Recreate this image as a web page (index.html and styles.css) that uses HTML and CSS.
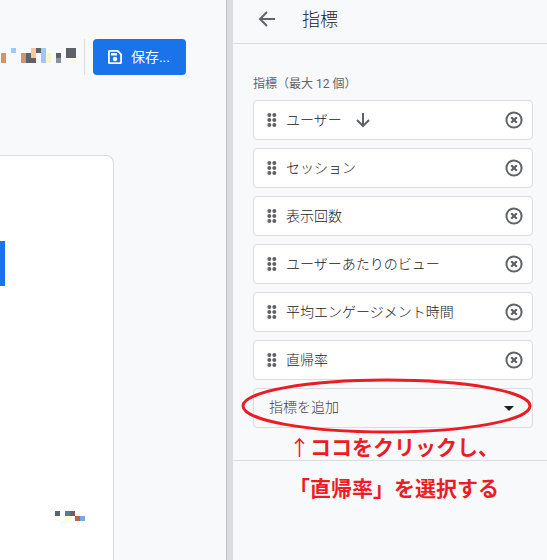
FILE: index.html
```html
<!DOCTYPE html>
<html lang="ja">
<head>
<meta charset="utf-8">
<title>指標</title>
<link rel="stylesheet" href="styles.css">
</head>
<body>
<svg class="sprite" aria-hidden="true">
  <symbol id="grip" viewBox="0 0 10 14"><g fill="#5f6368"><circle cx="2.3" cy="2" r="2"/><circle cx="7.3" cy="2" r="2"/><circle cx="2.3" cy="7" r="2"/><circle cx="7.3" cy="7" r="2"/><circle cx="2.3" cy="12" r="2"/><circle cx="7.3" cy="12" r="2"/></g></symbol>
  <symbol id="remove" viewBox="0 0 18 18"><circle cx="9" cy="9" r="7.6" fill="none" stroke="#5f6368" stroke-width="2"/><path d="M6.200 6.200l5.600 5.600M11.800 6.200l-5.600 5.600" stroke="#5f6368" stroke-width="2.300"/></symbol>
</svg>
<div class="app">
  <main class="report">
    <div class="toolbar">
      <svg class="mosaic" width="75" height="15" shape-rendering="crispEdges" aria-hidden="true">
        <path fill="#5f6169" d="M25 5h5v10h-5zM30 10h5v5h-5zM35 0h5v5h-5zM55 5h5v5h-5zM65 0h10v10h-10z"/>
        <path fill="#d39469" d="M0 5h5v10h-5zM20 5h5v10h-5z"/>
        <path fill="#9dc8fa" d="M10 0h5v5h-5zM40 0h5v15h-5z"/>
        <path fill="#fac898" d="M30 0h5v10h-5z"/>
        <path fill="#f6f8cc" d="M45 5h5v10h-5z"/>
        <path fill="#8b949b" d="M55 10h5v5h-5z"/>
        <path fill="#f6f8e0" d="M70 10h5v5h-5z"/>
      </svg>
      <button class="save" type="button">
        <svg width="16" height="16" viewBox="0 0 16 16" aria-hidden="true"><path fill="#fff" fill-rule="evenodd" d="M2.500 1H11l4 4v8.500a1.500 1.500 0 0 1-1.500 1.500h-11A1.500 1.500 0 0 1 1 13.500v-11A1.500 1.500 0 0 1 2.500 1zM2.800 2.800v10.400h10.400V5.800l-3-3z"/><path fill="#fff" d="M4 4h6v2.500H4z"/><circle cx="8" cy="10" r="2.200" fill="#fff"/></svg>
        <span>保存...</span>
      </button>
    </div>
    <section class="card">
      <div class="bar"></div>
      <svg class="values" width="30" height="15" shape-rendering="crispEdges" aria-hidden="true">
        <path fill="#5c6070" d="M0 0h5v5h-5z"/><path fill="#5b78ad" d="M10 0h5v5h-5z"/>
        <path fill="#715f62" d="M15 0h5v5h-5z"/><path fill="#fff9ec" d="M20 0h5v5h-5zM0 5h5v5h-5z"/>
        <path fill="#ffffc8" d="M10 5h5v5h-5z"/><path fill="#b8624f" d="M20 5h5v5h-5z"/>
        <path fill="#74a9e8" d="M25 5h5v5h-5z"/><path fill="#f0fdff" d="M5 10h5v5h-5z"/>
      </svg>
    </section>
  </main>
  <aside class="panel">
    <header class="panel-head">
      <button class="icon-button" type="button" aria-label="戻る"><svg width="18" height="18" viewBox="0 0 18 18"><path d="M17 9H2.500M9 2L2 9l7 7" fill="none" stroke="#5f6368" stroke-width="2"/></svg></button>
      <h1>指標</h1>
    </header>
    <section class="metrics">
      <h2>指標（最大 12 個）</h2>
      <ul>
        <li><svg class="grip"><use href="#grip"/></svg><span>ユーザー</span><svg class="sort" width="16" height="16" viewBox="0 0 16 16"><path d="M8 1v13M2 8l6 6 6-6" fill="none" stroke="#5f6368" stroke-width="2"/></svg><button class="icon-button remove" type="button" aria-label="削除"><svg><use href="#remove"/></svg></button></li>
        <li><svg class="grip"><use href="#grip"/></svg><span>セッション</span><button class="icon-button remove" type="button" aria-label="削除"><svg><use href="#remove"/></svg></button></li>
        <li><svg class="grip"><use href="#grip"/></svg><span>表示回数</span><button class="icon-button remove" type="button" aria-label="削除"><svg><use href="#remove"/></svg></button></li>
        <li><svg class="grip"><use href="#grip"/></svg><span>ユーザーあたりのビュー</span><button class="icon-button remove" type="button" aria-label="削除"><svg><use href="#remove"/></svg></button></li>
        <li><svg class="grip"><use href="#grip"/></svg><span>平均エンゲージメント時間</span><button class="icon-button remove" type="button" aria-label="削除"><svg><use href="#remove"/></svg></button></li>
        <li><svg class="grip"><use href="#grip"/></svg><span>直帰率</span><button class="icon-button remove" type="button" aria-label="削除"><svg><use href="#remove"/></svg></button></li>
      </ul>
      <div class="add">
        <select aria-label="指標を追加"><option>指標を追加</option></select>
        <svg class="caret" width="10" height="5" viewBox="0 0 10 5"><path d="M0 0h10L5 5z" fill="#202124"/></svg>
        <svg class="ring" viewBox="0 0 290 56" preserveAspectRatio="none"><ellipse cx="145" cy="28" rx="143" ry="26" fill="none" stroke="#ed1c24" stroke-width="3"/></svg>
        <p class="note"><span class="arrow">↑</span>ココをクリックし、<br>「直帰率」を選択する</p>
      </div>
    </section>
  </aside>
</div>
</body>
</html>
```
FILE: styles.css
```css
* { box-sizing: border-box; }
body {
  margin: 0;
  background: #f8f9fb;
  color: #202124;
  font-family: Roboto, "Noto Sans CJK JP", sans-serif;
  font-size: 14px;
  font-weight: 300;
}
.sprite { position: absolute; width: 0; height: 0; }
.app {
  display: grid;
  grid-template-columns: minmax(0, 233fr) minmax(0, 314fr);
  min-height: 100vh;
}
.report {
  display: flex;
  flex-direction: column;
  border-right: 6px solid #dadce0;
  box-shadow: inset -1px 0 #bdc1c6;
}
.toolbar {
  display: flex;
  justify-content: flex-end;
  margin: 39px 41px 80px 0;
}
.mosaic { flex: none; margin: 9px 8px 0 0; }
.save {
  display: flex;
  align-items: center;
  gap: 8px;
  height: 36px;
  padding: 0 16px 0 14px;
  border: 0;
  border-radius: 4px;
  background: #1a73e8;
  color: #fff;
  font: 400 14px Roboto, "Noto Sans CJK JP", sans-serif;
  white-space: nowrap;
  position: relative;
  margin-left: 9px;
}
.save span { padding-bottom: 2px; }
.save::before {
  content: "";
  position: absolute;
  left: -9px;
  top: 0;
  width: 1px;
  height: 100%;
  background: #dadce0;
}
.card {
  flex: 1;
  display: flex;
  flex-direction: column;
  justify-content: space-between;
  margin-right: 113px;
  padding: 85px 0 34px;
  border: solid #dadce0;
  border-width: 1px 1px 0 0;
  border-radius: 0 8px 0 0;
  background: #fff;
}
.bar { width: 5px; height: 45px; background: #1a73e8; }
.values { margin-left: 55px; }
.panel-head {
  display: flex;
  align-items: center;
  gap: 26px;
  height: 44px;
  padding: 0 25px 6px;
  border-bottom: 1px solid #dadce0;
}
h1 {
  margin: 0;
  padding-bottom: 2px;
  font-size: 18px;
  font-weight: 300;
}
h2 {
  margin: 0 0 8px;
  font-size: 12px;
  font-weight: 400;
  line-height: 16px;
  color: #5f6368;
}
.icon-button {
  display: flex;
  padding: 0;
  border: 0;
  background: none;
}
.metrics { padding: 32px 14px 32px 20px; border-bottom: 1px solid #dadce0; }
ul {
  display: grid;
  gap: 8px;
  margin: 0 0 8px;
  padding: 0;
  list-style: none;
}
li {
  display: flex;
  align-items: center;
  height: 40px;
  padding: 0 9px 0 13px;
  border: 1px solid #dadce0;
  border-radius: 4px;
  background: #fff;
}
li span { padding-bottom: 2px; }
.grip { width: 10px; height: 14px; margin-right: 9px; }
.sort { margin-left: 13px; }
.remove { margin-left: auto; }
.remove svg { width: 18px; height: 18px; }
.add { position: relative; height: 40px; }
select {
  appearance: none;
  width: 100%;
  height: 40px;
  padding: 0 15px 2px;
  border: 1px solid #dadce0;
  border-radius: 4px;
  background: transparent;
  color: #3c4043;
  font: 300 14px Roboto, "Noto Sans CJK JP", sans-serif;
}
.caret { position: absolute; right: 19px; top: 18px; pointer-events: none; }
.ring {
  position: absolute;
  left: -12px;
  top: -10px;
  width: calc(100% + 11px);
  height: 56px;
  pointer-events: none;
}
.note {
  position: absolute;
  left: 36px;
  top: 38px;
  margin: 0;
  color: #ed1c24;
  font: 700 21px/41px "Noto Sans CJK JP", sans-serif;
  white-space: nowrap;
}
.arrow { font-weight: 400; }
```
